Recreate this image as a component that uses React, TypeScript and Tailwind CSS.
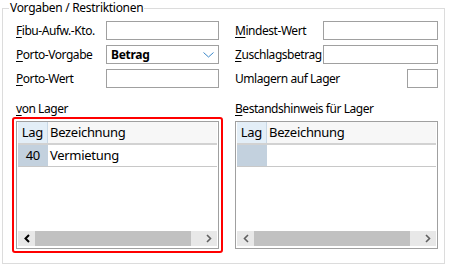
import type { ReactNode } from "react";

function Label({ k, rest, className = "" }: { k?: string; rest: string; className?: string }) {
  return (
    <span className={`whitespace-nowrap tracking-[-0.45px] ${className}`}>
      {k && <u className="underline-offset-[2px]">{k}</u>}
      {rest}
    </span>
  );
}

function Row({ label, children }: { label: ReactNode; children: ReactNode }) {
  return (
    <div className="flex items-center h-[19px]">
      {label}
      {children}
    </div>
  );
}

function Arrow({ dir, dark }: { dir: "left" | "right"; dark?: boolean }) {
  return (
    <svg width="6" height="9" viewBox="0 0 6 9">
      <polyline
        points={dir === "left" ? "5,1 1.5,4.5 5,8" : "1,1 4.5,4.5 1,8"}
        fill="none"
        stroke={dark ? "#000000" : "#606060"}
        strokeWidth={dark ? 2 : 1.6}
      />
    </svg>
  );
}

function Grid({ filled, leftDark }: { filled: boolean; leftDark?: boolean }) {
  return (
    <div className="h-[128px] border border-[#a0a0a0] bg-white px-[1px] pb-[2px] flex flex-col text-[13px] tracking-[-0.3px]">
      <div className="flex h-[21px] leading-[21px]">
        <div className="w-[30px] bg-[#e3eef7] border-r border-[#c8d8e6] text-right pr-[4px]">Lag</div>
        <div className="flex-1 bg-[#f7f7f7] pl-[2px]">Bezeichnung</div>
      </div>
      <div className="h-[2px] bg-[#d2d2d2]" />
      <div className="flex h-[22px] leading-[21px] border-b border-[#c8c8c8]">
        <div className="w-[30px] bg-[#c3d1de] text-right pr-[8px]">{filled ? "40" : ""}</div>
        <div className="flex-1 pl-[2px]">{filled ? "Vermietung" : ""}</div>
      </div>
      <div className="flex-1" />
      <div className="flex h-[15px] bg-[#e8e8e8]">
        <div className="w-[17px] flex items-center justify-center">
          <Arrow dir="left" dark={leftDark} />
        </div>
        <div className="flex-1 flex items-stretch">
          <div className="w-[156px] bg-[#c1c1c1]" />
        </div>
        <div className="w-[17px] flex items-center justify-center">
          <Arrow dir="right" />
        </div>
      </div>
    </div>
  );
}

export default function App() {
  return (
    <div className="w-[451px] h-[266px] bg-white text-black text-[12px] font-['Noto_Sans',sans-serif] pl-[2px]">
      <fieldset className="w-[443px] h-[264px] border border-[#dcdcdc] px-0 pb-0">
        <legend className="ml-[6px] px-[1px] leading-[16px] tracking-[-0.3px]">Vorgaben / Restriktionen</legend>

        <div className="flex pt-[5px] pl-[13px] gap-x-[16px]">
          <div className="flex flex-col gap-y-[5px]">
            <Row label={<Label k="F" rest="ibu-Aufw.-Kto." className="w-[90px]" />}>
              <div className="w-[113px] h-[19px] border border-[#a0a0a0]" />
            </Row>
            <Row label={<Label k="P" rest="orto-Vorgabe" className="w-[90px]" />}>
              <div className="w-[113px] h-[19px] border border-[#a0a0a0] flex items-center justify-between pl-[4px] pr-[4px]">
                <span className="font-bold tracking-[-0.3px]">Betrag</span>
                <svg width="11" height="6" viewBox="0 0 11 6">
                  <polyline points="0.5,0.5 5.5,5 10.5,0.5" fill="none" stroke="#3a86c8" strokeWidth="1" />
                </svg>
              </div>
            </Row>
            <Row label={<Label k="P" rest="orto-Wert" className="w-[90px]" />}>
              <div className="w-[113px] h-[19px] border border-[#a0a0a0]" />
            </Row>
          </div>
          <div className="flex flex-col gap-y-[5px]">
            <Row label={<Label k="M" rest="indest-Wert" className="w-[88px]" />}>
              <div className="w-[115px] h-[19px] border border-[#a0a0a0]" />
            </Row>
            <Row label={<Label k="Z" rest="uschlagsbetrag" className="w-[88px]" />}>
              <div className="w-[115px] h-[19px] border border-[#a0a0a0]" />
            </Row>
            <Row label={<Label rest="Umlagern auf Lager" className="flex-1" />}>
              <div className="w-[31px] h-[19px] border border-[#a0a0a0]" />
            </Row>
          </div>
        </div>

        <div className="flex mt-[13px] pl-[9px] gap-x-[8px]">
          <div className="w-[211px] flex flex-col">
            <div className="pl-[4px] leading-[16px]">
              <Label k="v" rest="on Lager" />
            </div>
            <div className="border-2 border-[#ff0000] rounded-[3px] p-[2px]">
              <Grid filled leftDark />
            </div>
          </div>
          <div className="w-[211px] flex flex-col">
            <div className="pl-[4px] leading-[16px]">
              <Label k="B" rest="estandshinweis für Lager" />
            </div>
            <div className="border-2 border-transparent p-[2px]">
              <Grid filled={false} />
            </div>
          </div>
        </div>
      </fieldset>
    </div>
  );
}
